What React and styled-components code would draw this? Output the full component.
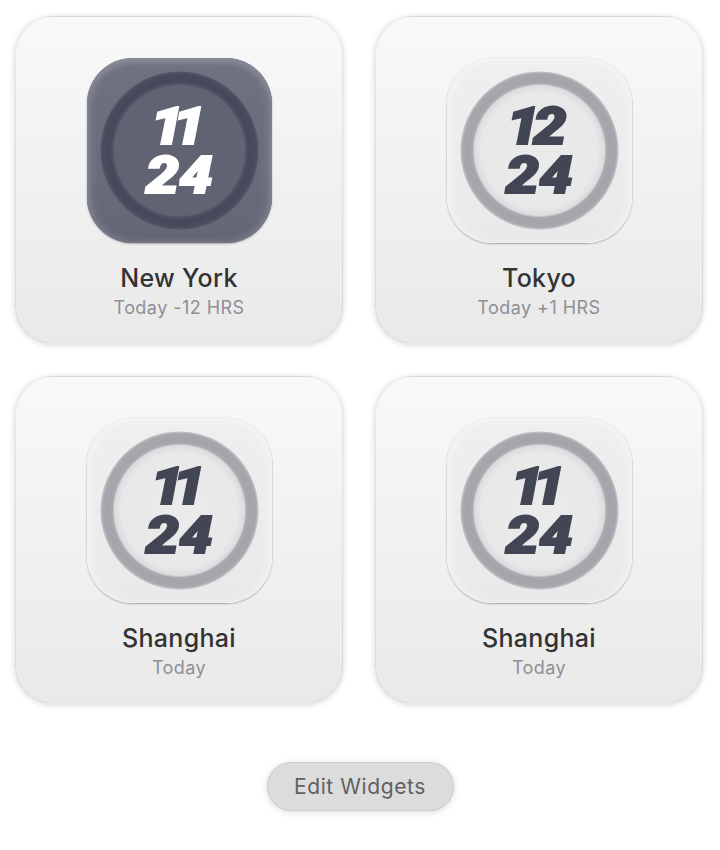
import React from "react";
import styled, { createGlobalStyle } from "styled-components";

const GlobalStyle = createGlobalStyle`
  html, body {
    margin: 0;
    padding: 0;
    background: #ffffff;
    font-family: "Inter", "Liberation Sans", sans-serif;
  }
`;

const Page = styled.div`
  width: 720px;
  height: 850px;
  box-sizing: border-box;
  padding-top: 16px;
  display: flex;
  flex-direction: column;
  align-items: center;
`;

const Grid = styled.div`
  align-self: flex-start;
  margin-left: 15px;
  display: grid;
  grid-template-columns: 328px 328px;
  grid-auto-rows: 328px;
  gap: 32px;
`;

const Card = styled.div`
  box-sizing: border-box;
  border-radius: 38px;
  padding-top: 41px;
  display: flex;
  flex-direction: column;
  align-items: center;
  background: linear-gradient(180deg, #f9f9f9 0%, #e9e9e9 100%);
  border: 1px solid rgba(0, 0, 0, 0.07);
  box-shadow: 0 1px 6px rgba(0, 0, 0, 0.17);
`;

const Tile = styled.div`
  width: 185px;
  height: 185px;
  flex: none;
  box-sizing: border-box;
  border-radius: 46px;
  display: flex;
  align-items: center;
  justify-content: center;
  background: ${(p) =>
    p.$dark
      ? "linear-gradient(180deg, #6f7280 0%, #646776 100%)"
      : "linear-gradient(180deg, #efefef 0%, #e9e9e9 100%)"};
  box-shadow: ${(p) =>
    p.$dark
      ? "inset 0 4px 7px #8b8e9b, inset 5px 0 8px #797c8a, inset -5px 0 8px #797c8a, inset 0 -4px 6px #5d6070, 0 1px 2px rgba(0,0,0,.3)"
      : "inset 0 3px 7px #f4f4f4, inset 5px 0 8px #f2f2f2, inset -5px 0 8px #f2f2f2, inset 0 -4px 6px #e0e0e0, 0 0 0 0.5px rgba(0,0,0,.08), 0 1px 2px rgba(0,0,0,.28)"};
`;

const Ring = styled.div`
  width: 159px;
  height: 159px;
  border-radius: 50%;
  display: flex;
  align-items: center;
  justify-content: center;
  background: ${(p) =>
    p.$dark
      ? "radial-gradient(circle closest-side, #606372 0, #606372 65px, #4e5162 67px, #45485a 70px, #484b5c 76px, #525565 78.5px, #66697800 79.5px)"
      : "radial-gradient(circle closest-side, #ebebeb 0, #e8e8e9 58px, #dcdcde 65px, #a9abb1 67px, #a3a5ab 70px, #a5a7ad 76.5px, #bfc0c4 78.5px, #e9e9e900 79.5px)"};
`;

const Digits = styled.div`
  font-family: "Roboto", "Liberation Sans", sans-serif;
  font-weight: 900;
  font-style: italic;
  font-size: 52px;
  line-height: 49px;
  text-align: center;
  transform: scaleX(1.15);
  color: ${(p) => (p.$dark ? "#ffffff" : "#424654")};
  -webkit-text-stroke: 1.8px ${(p) => (p.$dark ? "#ffffff" : "#424654")};
`;

const Hour = styled.span`
  display: inline-block;
  letter-spacing: ${(p) => p.$tight}px;
  padding-right: ${(p) => p.$pad}px;
`;

const City = styled.div`
  margin-top: 20px;
  font-size: 25px;
  line-height: 30px;
  font-weight: 500;
  letter-spacing: 0.3px;
  color: #333333;
`;

const Note = styled.div`
  margin-top: 1px;
  font-size: 18px;
  line-height: 28px;
  letter-spacing: 0.45px;
  color: #8e8f96;
`;

const EditButton = styled.button`
  margin-top: 58px;
  width: 187px;
  height: 49px;
  border-radius: 25px;
  border: 1px solid rgba(0, 0, 0, 0.07);
  background: #dcdcdc;
  box-shadow: 0 1px 7px rgba(0, 0, 0, 0.15);
  font-family: inherit;
  font-size: 21px;
  letter-spacing: 0.6px;
  color: #606060;
  padding: 0;
`;

const clocks = [
  { city: "New York", note: "Today -12 HRS", hour: "11", tight: -10, pad: 12, dark: true },
  { city: "Tokyo", note: "Today +1 HRS", hour: "12", tight: -6, pad: 11 },
  { city: "Shanghai", note: "Today", hour: "11", tight: -10, pad: 12 },
  { city: "Shanghai", note: "Today", hour: "11", tight: -10, pad: 12 },
];

export default function App() {
  return (
    <Page>
      <GlobalStyle />
      <Grid>
        {clocks.map((c, i) => (
          <Card key={i}>
            <Tile $dark={c.dark}>
              <Ring $dark={c.dark}>
                <Digits $dark={c.dark}>
                  <Hour $tight={c.tight} $pad={c.pad}>{c.hour}</Hour>
                  <br />
                  24
                </Digits>
              </Ring>
            </Tile>
            <City>{c.city}</City>
            <Note>{c.note}</Note>
          </Card>
        ))}
      </Grid>
      <EditButton>Edit Widgets</EditButton>
    </Page>
  );
}
